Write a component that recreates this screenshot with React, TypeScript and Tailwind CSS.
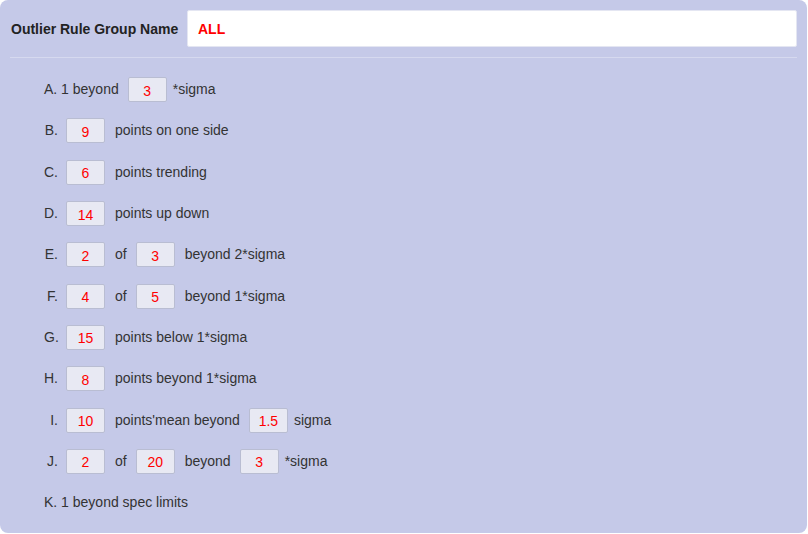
import React from 'react'

type Part = { t: 'text'; v: string; gap?: number } | { t: 'num'; v: string }

const rows: { label?: string; parts: Part[] }[] = [
  { parts: [{ t: 'text', v: 'A. 1 beyond', gap: 0 }, { t: 'num', v: '3' }, { t: 'text', v: '*sigma', gap: 6 }] },
  { label: 'B.', parts: [{ t: 'num', v: '9' }, { t: 'text', v: 'points on one side' }] },
  { label: 'C.', parts: [{ t: 'num', v: '6' }, { t: 'text', v: 'points trending' }] },
  { label: 'D.', parts: [{ t: 'num', v: '14' }, { t: 'text', v: 'points up down' }] },
  { label: 'E.', parts: [{ t: 'num', v: '2' }, { t: 'text', v: 'of' }, { t: 'num', v: '3' }, { t: 'text', v: 'beyond 2*sigma' }] },
  { label: 'F.', parts: [{ t: 'num', v: '4' }, { t: 'text', v: 'of' }, { t: 'num', v: '5' }, { t: 'text', v: 'beyond 1*sigma' }] },
  { label: 'G.', parts: [{ t: 'num', v: '15' }, { t: 'text', v: 'points below 1*sigma' }] },
  { label: 'H.', parts: [{ t: 'num', v: '8' }, { t: 'text', v: 'points beyond 1*sigma' }] },
  { label: 'I.', parts: [{ t: 'num', v: '10' }, { t: 'text', v: "points'mean beyond" }, { t: 'num', v: '1.5' }, { t: 'text', v: 'sigma', gap: 6 }] },
  {
    label: 'J.',
    parts: [
      { t: 'num', v: '2' },
      { t: 'text', v: 'of' },
      { t: 'num', v: '20' },
      { t: 'text', v: 'beyond' },
      { t: 'num', v: '3' },
      { t: 'text', v: '*sigma', gap: 6 },
    ],
  },
  { parts: [{ t: 'text', v: 'K. 1 beyond spec limits', gap: 0 }] },
]

function NumBox({ value, first }: { value: string; first: boolean }) {
  return (
    <input
      readOnly
      value={value}
      className={
        'h-[25px] w-[39px] rounded-[2px] border border-[#b9bdd2] bg-[#e8e9f3] pt-[2px] text-center text-[14px] text-[#ff0000] outline-none ' +
        (first ? 'ml-[8px]' : 'ml-[9px]')
      }
    />
  )
}

export default function App() {
  return (
    <div className="bg-white" style={{ fontFamily: '"Liberation Sans", Arial, sans-serif' }}>
      <div className="flex h-[533px] w-[807px] flex-col rounded-lg bg-[#c5c9e8]">
        <div className="flex items-center pl-[11px] pr-[10px] pt-[10px]">
          <span className="w-[176px] pt-[2px] text-[14px] font-bold text-[#222]">Outlier Rule Group Name</span>
          <div className="flex h-[37px] flex-1 items-center rounded-[2px] border border-[#e4e6f2] bg-white pl-[10px] pt-[2px] text-[14px] font-bold text-[#ff0000]">
            ALL
          </div>
        </div>
        <div className="mx-[10px] mt-[10px] border-t border-[#d6d9ef]" />

        <div className="flex flex-col pt-[11px]">
          {rows.map((r, i) => (
            <div key={i} className="flex h-[41.3px] items-center pl-[44px] text-[14px] text-[#333]">
              {r.label && <span className="w-[14px] whitespace-nowrap text-right">{r.label}</span>}
              {r.parts.map((p, j) =>
                p.t === 'num' ? (
                  <NumBox key={j} value={p.v} first={j === 0 && !!r.label} />
                ) : (
                  <span
                    key={j}
                    className="whitespace-nowrap"
                    style={{ marginLeft: p.gap !== undefined ? p.gap : 10 }}
                  >
                    {p.v}
                  </span>
                )
              )}
            </div>
          ))}
        </div>
      </div>
    </div>
  )
}
